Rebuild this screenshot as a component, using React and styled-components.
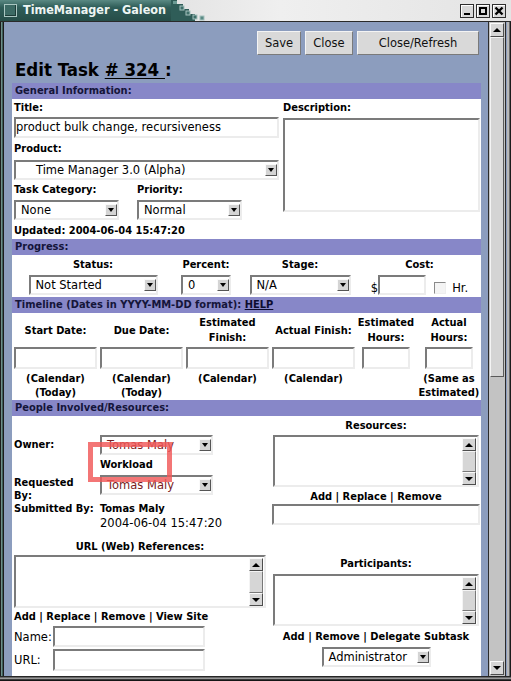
import React from 'react';
import styled, { createGlobalStyle } from 'styled-components';

const sans = `"DejaVu Sans", "Liberation Sans", sans-serif`;
const cond = `"DejaVu Sans Condensed", "DejaVu Sans", sans-serif`;

const GlobalStyle = createGlobalStyle`
  html, body { margin: 0; padding: 0; }
  body { width: 511px; height: 681px; overflow: hidden; background: #2a2a2a; }
`;

const Window = styled.div`
  width: 511px;
  height: 681px;
  display: flex;
  flex-direction: column;
  overflow: hidden;
  background: #3b3b3b;
`;

const TitleBar = styled.div`
  height: 21px;
  flex: none;
  display: flex;
  align-items: stretch;
  background: linear-gradient(to right, #d2d2d2, #efefef 55%, #e4e4e4);
  border-bottom: 1px solid #2a2a2a;
`;

const TitleTab = styled.div`
  flex: none;
  min-width: 168px;
  display: flex;
  align-items: center;
  gap: 6px;
  padding: 0 5px 0 4px;
  box-sizing: border-box;
  background: linear-gradient(to bottom, #5a8983, #2f5d58 35%, #264d48);
  color: #eef5f3;
  font: bold 12.5px/1 ${cond};
  font-stretch: condensed;
  white-space: nowrap;
`;

const AppIcon = styled.span`
  width: 13px;
  height: 13px;
  flex: none;
  box-sizing: border-box;
  background: #3c6a64;
  border: 1px solid #a9c6c1;
  box-shadow: inset -1px -1px 0 #1d3c38;
`;

const WinButtons = styled.div`
  margin-left: auto;
  display: flex;
  align-items: center;
  gap: 2px;
  padding-right: 5px;
`;

const WinButton = styled.span`
  width: 14px;
  height: 14px;
  box-sizing: border-box;
  background: #d9d9d9;
  border: 1px solid #2e2e2e;
  box-shadow: inset 1px 1px 0 #fff;
  display: flex;
  align-items: center;
  justify-content: center;
`;

const Main = styled.div`
  flex: 1;
  min-height: 0;
  display: flex;
`;

const LeftFrame = styled.div`
  width: 4px;
  flex: none;
  background: linear-gradient(to right, #1c1c1c 0 1px, #6e8f8b 1px 2px, #3d5d59 2px 3px, #1c1c1c 3px);
`;

const RightFrame = styled.div`
  width: 5px;
  flex: none;
  background: linear-gradient(to right, #8c9dbe 0 1px, #b8b8b8 1px 3px, #6b6b6b 3px 4px, #1c1c1c 4px);
`;

const BottomFrame = styled.div`
  height: 5px;
  flex: none;
  background: linear-gradient(to bottom, #262626 0 1px, #6a6a6a 1px 2px, #9a9a9a 2px 3px, #3a3a3a 3px 4px, #151515 4px);
`;

const Content = styled.div`
  width: 484px;
  flex: none;
  box-sizing: border-box;
  overflow: hidden;
  background: #8c9dbe;
  padding: 9px 7px 0 8px;
`;

const Gutter = styled.div`
  width: 18px;
  flex: none;
  box-sizing: border-box;
  background: #c3c3c3;
  border-left: 1px solid #2c2c2c;
  border-right: 1px solid #2c2c2c;
  display: flex;
  flex-direction: column;
  padding: 1px 1px;
`;

const Thumb = styled.div`
  height: ${(p) => p.$h}px;
  box-sizing: border-box;
  background: #d4d4d4;
  border: 1px solid;
  border-color: #f4f4f4 #5a5a5a #5a5a5a #f4f4f4;
`;

const Track = styled.div`
  flex: 1;
`;

const ScrollBtn = styled.div`
  height: ${(p) => p.$s || 13}px;
  flex: none;
  box-sizing: border-box;
  background: #d6d6d6;
  border: 1px solid;
  border-color: #fafafa #4d4d4d #4d4d4d #fafafa;
  display: flex;
  align-items: center;
  justify-content: center;
  &::after {
    content: '';
    border-left: 4px solid transparent;
    border-right: 4px solid transparent;
    ${(p) => (p.$up ? 'border-bottom: 4px solid #000;' : 'border-top: 4px solid #000;')}
  }
`;

const ButtonBar = styled.div`
  display: flex;
  justify-content: flex-end;
  gap: 4px;
  padding-right: 2px;
`;

const Button = styled.div`
  width: ${(p) => p.$w}px;
  height: 24px;
  box-sizing: border-box;
  background: #d9d9d9;
  border: 1px solid;
  border-color: #f4f4f4 #7a7a7a #7a7a7a #f4f4f4;
  display: flex;
  align-items: center;
  justify-content: center;
  font: 11.5px ${sans};
  color: #111;
`;

const Heading = styled.h1`
  margin: 4px 0 2px 3px;
  font: bold 18.5px/22px ${cond};
  font-stretch: condensed;
  color: #000;
  u {
    text-underline-offset: 2px;
  }
`;

const Panel = styled.div`
  width: 469px;
`;

const SectionHead = styled.div`
  height: 16px;
  background: #8787c8;
  padding-left: 3px;
  font: bold 11px/16px ${cond};
  font-stretch: condensed;
  color: #15153a;
  u {
    color: #0d0d2e;
  }
`;

const SectionBody = styled.div`
  background: #fff;
  height: ${(p) => (p.$h ? `${p.$h}px` : 'auto')};
  box-sizing: border-box;
  padding: 0 1px 0 2px;
  position: relative;
`;

const Label = styled.div`
  font: bold 11px/${(p) => p.$lh || 14}px ${cond};
  font-stretch: condensed;
  color: #000;
  margin-top: ${(p) => p.$mt || 0}px;
  text-align: ${(p) => p.$align || 'left'};
  white-space: nowrap;
`;

const Text = styled.div`
  font: 11.5px/14px ${sans};
  color: #000;
  margin-top: ${(p) => p.$mt || 0}px;
  white-space: nowrap;
`;

const sunken = `
  box-sizing: border-box;
  background: #fff;
  border: 2px solid;
  border-color: #7b7b7b #ececec #ececec #7b7b7b;
`;

const Field = styled.div`
  ${sunken}
  width: ${(p) => p.$w}px;
  height: ${(p) => p.$h || 21}px;
  margin-top: ${(p) => p.$mt || 0}px;
  font: 11.5px/17px ${sans};
  color: #000;
  white-space: nowrap;
  overflow: hidden;
`;

const SelectBox = styled.div`
  ${sunken}
  width: ${(p) => p.$w}px;
  height: 20px;
  margin-top: ${(p) => p.$mt || 0}px;
  display: flex;
  align-items: center;
  padding: 0 0 0 ${(p) => (p.$indent != null ? p.$indent : 5)}px;
  font: 11.5px ${sans};
  color: ${(p) => p.$tone || '#000'};
  white-space: nowrap;
`;

const Arrow = styled.span`
  margin-left: auto;
  width: 12px;
  height: 12px;
  flex: none;
  box-sizing: border-box;
  background: #d4d4d4;
  border: 1px solid;
  border-color: #fafafa #555 #555 #fafafa;
  display: flex;
  align-items: center;
  justify-content: center;
  &::after {
    content: '';
    border-left: 3px solid transparent;
    border-right: 3px solid transparent;
    border-top: 4px solid #000;
  }
`;

const Select = ({ w, mt, indent, tone, children }) => (
  <SelectBox $w={w} $mt={mt} $indent={indent} $tone={tone}>
    <span>{children}</span>
    <Arrow />
  </SelectBox>
);

const ListBoxFrame = styled.div`
  ${sunken}
  width: ${(p) => p.$w}px;
  height: ${(p) => p.$h}px;
  margin-top: ${(p) => p.$mt || 0}px;
  display: flex;
  justify-content: flex-end;
  padding: 1px 1px 0 0;
`;

const ListScroll = styled.div`
  width: 14px;
  display: flex;
  flex-direction: column;
`;

const ListThumb = styled.div`
  flex: 1;
  box-sizing: border-box;
  background: #d6d6d6;
  border: 1px solid;
  border-color: #f4f4f4 #777 #777 #f4f4f4;
`;

const ListBox = ({ w, h, mt }) => (
  <ListBoxFrame $w={w} $h={h} $mt={mt}>
    <ListScroll>
      <ScrollBtn $up />
      <ListThumb />
      <ScrollBtn />
    </ListScroll>
  </ListBoxFrame>
);

/* general */
const GeneralGrid = styled.div`
  display: grid;
  grid-template-columns: 265px 197px;
  column-gap: 4px;
  padding-top: 1px;
`;

const Col = styled.div`
  display: flex;
  flex-direction: column;
  align-items: ${(p) => p.$align || 'flex-start'};
  margin-top: ${(p) => p.$mt || 0}px;
`;

const Pair = styled.div`
  display: flex;
  gap: ${(p) => p.$gap || 0}px;
  margin-top: ${(p) => p.$mt || 0}px;
`;

/* progress */
const ProgressGrid = styled.div`
  display: grid;
  grid-template-columns: 158px 68px 120px 119px;
  justify-items: center;
  padding-top: 3px;
`;

const CostWrap = styled.div`
  display: flex;
  align-items: flex-end;
  margin-top: 3px;
  font: 11.5px/14px ${sans};
`;

const Check = styled.span`
  ${sunken}
  width: 12px;
  height: 12px;
  margin: 0 6px 1px 8px;
  background: #f4f4f4;
  border-width: 1px;
  border-color: #8a8a8a #eee #eee #8a8a8a;
`;

/* timeline */
const TimelineGrid = styled.div`
  display: grid;
  grid-template-columns: 83px 83px 83px 83px 56px 64px;
  column-gap: 3px;
  padding-top: 1px;
`;

const TLCell = styled.div`
  display: flex;
  flex-direction: column;
  align-items: center;
`;

const TLHead = styled.div`
  height: 32px;
  display: flex;
  align-items: center;
  justify-content: center;
  text-align: center;
  font: bold 11px/15px ${cond};
  font-stretch: condensed;
  white-space: nowrap;
`;

const TLNote = styled.div`
  margin-top: 3px;
  text-align: center;
  font: bold 11px/14px ${cond};
  font-stretch: condensed;
  white-space: nowrap;
`;

/* people */
const PeopleGrid = styled.div`
  display: grid;
  grid-template-columns: 252px 208px;
  column-gap: 6px;
  align-items: start;
  padding-top: ${(p) => p.$pt || 0}px;
`;

const PersonGrid = styled.div`
  display: grid;
  grid-template-columns: 86px auto;
  align-items: start;
`;

const NameRow = styled.div`
  display: flex;
  align-items: center;
  margin-top: ${(p) => p.$mt || 0}px;
  span {
    width: 39px;
    font: 11.5px ${sans};
  }
`;

const Highlight = styled.div`
  position: absolute;
  left: 76px;
  top: 26px;
  width: 84px;
  height: 40px;
  box-sizing: border-box;
  border: 5px solid rgba(240, 88, 88, 0.82);
  pointer-events: none;
`;

const Stairs = () => (
  <svg width="36" height="21" viewBox="0 0 36 21">
    <rect x="0" y="0" width="6" height="21" fill="#2f5d58" />
    <rect x="6" y="4" width="6" height="17" fill="#2f5d58" />
    <rect x="12" y="9" width="6" height="12" fill="#2f5d58" />
    <rect x="18" y="14" width="6" height="7" fill="#2f5d58" />
    <rect x="2" y="1" width="4" height="3" fill="#6b9b94" />
    <rect x="9" y="6" width="4" height="4" fill="#3f706a" stroke="#a6c2be" strokeWidth="1" />
    <rect x="15" y="11" width="4" height="4" fill="#3f706a" stroke="#a6c2be" strokeWidth="1" />
    <rect x="22" y="15" width="4" height="4" fill="#3f706a" stroke="#a6c2be" strokeWidth="1" />
    <rect x="29" y="16" width="4" height="4" fill="#5a8a84" stroke="#a6c2be" strokeWidth="1" />
  </svg>
);

export default function App() {
  return (
    <>
      <GlobalStyle />
      <Window>
        <TitleBar>
          <TitleTab>
            <AppIcon />
            TimeManager - Galeon
          </TitleTab>
          <Stairs />
          <WinButtons>
            <WinButton>
              <svg width="8" height="8" viewBox="0 0 8 8"><rect x="1" y="6" width="6" height="2" fill="#000" /></svg>
            </WinButton>
            <WinButton>
              <svg width="8" height="8" viewBox="0 0 8 8"><rect x="1" y="1" width="6" height="6" fill="none" stroke="#000" strokeWidth="2" /></svg>
            </WinButton>
            <WinButton>
              <svg width="10" height="10" viewBox="0 0 10 10"><path d="M1.5 1.5 L8.5 8.5 M8.5 1.5 L1.5 8.5" stroke="#000" strokeWidth="2.4" /></svg>
            </WinButton>
          </WinButtons>
        </TitleBar>

        <Main>
          <LeftFrame />
          <Content>
            <ButtonBar>
              <Button $w={44}>Save</Button>
              <Button $w={48}>Close</Button>
              <Button $w={122}>Close/Refresh</Button>
            </ButtonBar>
            <Heading>
              Edit Task <u># 324 </u>:
            </Heading>

            <Panel>
              <SectionHead>General Information:</SectionHead>
              <SectionBody $h={140}>
                <GeneralGrid>
                  <Col>
                    <Label $mt={1}>Title:</Label>
                    <Field $w={265} $mt={2}>product bulk change, recursiveness</Field>
                    <Label $mt={4}>Product:</Label>
                    <Select w={265} mt={4} indent={20}>Time Manager 3.0 (Alpha)</Select>
                    <Pair $gap={18} $mt={3}>
                      <Col>
                        <Label>Task Category:</Label>
                        <Select w={105} mt={3}>None</Select>
                      </Col>
                      <Col>
                        <Label>Priority:</Label>
                        <Select w={105} mt={3}>Normal</Select>
                      </Col>
                    </Pair>
                    <Label $mt={4}>Updated: 2004-06-04 15:47:20</Label>
                  </Col>
                  <Col>
                    <Label $mt={1}>Description:</Label>
                    <Field $w={197} $h={94} $mt={3} />
                  </Col>
                </GeneralGrid>
              </SectionBody>

              <SectionHead>Progress:</SectionHead>
              <SectionBody $h={42}>
                <ProgressGrid>
                  <Col $align="center">
                    <Label>Status:</Label>
                    <Select w={129} mt={3}>Not Started</Select>
                  </Col>
                  <Col $align="center">
                    <Label>Percent:</Label>
                    <Select w={50} mt={3}>0</Select>
                  </Col>
                  <Col $align="center">
                    <Label>Stage:</Label>
                    <Select w={101} mt={3}>N/A</Select>
                  </Col>
                  <Col $align="center">
                    <Label>Cost:</Label>
                    <CostWrap>
                      <span>$</span>
                      <Field $w={48} $h={20} />
                      <Check />
                      <span>Hr.</span>
                    </CostWrap>
                  </Col>
                </ProgressGrid>
              </SectionBody>

              <SectionHead>
                Timeline (Dates in YYYY-MM-DD format): <u>HELP</u>
              </SectionHead>
              <SectionBody $h={87}>
                <TimelineGrid>
                  <TLCell>
                    <TLHead>Start Date:</TLHead>
                    <Field $w={83} $h={22} $mt={1} />
                    <TLNote>(Calendar)<br />(Today)</TLNote>
                  </TLCell>
                  <TLCell>
                    <TLHead>Due Date:</TLHead>
                    <Field $w={83} $h={22} $mt={1} />
                    <TLNote>(Calendar)<br />(Today)</TLNote>
                  </TLCell>
                  <TLCell>
                    <TLHead>Estimated<br />Finish:</TLHead>
                    <Field $w={83} $h={22} $mt={1} />
                    <TLNote>(Calendar)</TLNote>
                  </TLCell>
                  <TLCell>
                    <TLHead>Actual Finish:</TLHead>
                    <Field $w={83} $h={22} $mt={1} />
                    <TLNote>(Calendar)</TLNote>
                  </TLCell>
                  <TLCell>
                    <TLHead>Estimated<br />Hours:</TLHead>
                    <Field $w={48} $h={22} $mt={1} />
                  </TLCell>
                  <TLCell>
                    <TLHead>Actual<br />Hours:</TLHead>
                    <Field $w={48} $h={22} $mt={1} />
                    <TLNote>(Same as<br />Estimated)</TLNote>
                  </TLCell>
                </TimelineGrid>
              </SectionBody>

              <SectionHead>People Involved/Resources:</SectionHead>
              <SectionBody $h={300}>
                <PeopleGrid>
                  <PersonGrid>
                    <Label $mt={22}>Owner:</Label>
                    <Select w={113} mt={19} tone="#7a1c1c">Tomas Maly</Select>
                    <span />
                    <Label $mt={2} $lh={15}>Workload</Label>
                    <Label $mt={4} $lh={13}>Requested<br />By:</Label>
                    <Select w={113} mt={3} tone="#7a1c1c">Tomas Maly</Select>
                    <Label>Submitted By:</Label>
                    <Col>
                      <Label>Tomas Maly</Label>
                      <Text>2004-06-04 15:47:20</Text>
                    </Col>
                  </PersonGrid>
                  <Col $align="center">
                    <Label $mt={3}>Resources:</Label>
                    <ListBox w={206} h={52} mt={2} />
                    <Label $mt={3}>Add | Replace | Remove</Label>
                    <Field $w={208} />
                  </Col>
                </PeopleGrid>

                <PeopleGrid $pt={10}>
                  <Col>
                    <Label $align="center" style={{ alignSelf: 'stretch' }}>URL (Web) References:</Label>
                    <ListBox w={252} h={53} mt={1} />
                    <Label $mt={2}>Add | Replace | Remove | View Site</Label>
                    <NameRow $mt={2}>
                      <span>Name:</span>
                      <Field $w={152} />
                    </NameRow>
                    <NameRow $mt={2}>
                      <span>URL:</span>
                      <Field $w={152} $h={22} />
                    </NameRow>
                  </Col>
                  <Col $align="center" $mt={17}>
                    <Label>Participants:</Label>
                    <ListBox w={206} h={52} mt={3} />
                    <Label $mt={4}>Add | Remove | Delegate Subtask</Label>
                    <Select w={109} mt={3}>Administrator</Select>
                  </Col>
                </PeopleGrid>
                <Highlight />
              </SectionBody>
            </Panel>
          </Content>
          <Gutter>
            <ScrollBtn $up $s={14} />
            <Thumb $h={340} />
            <Track />
            <ScrollBtn $s={14} />
          </Gutter>
          <RightFrame />
        </Main>
        <BottomFrame />
      </Window>
    </>
  );
}
